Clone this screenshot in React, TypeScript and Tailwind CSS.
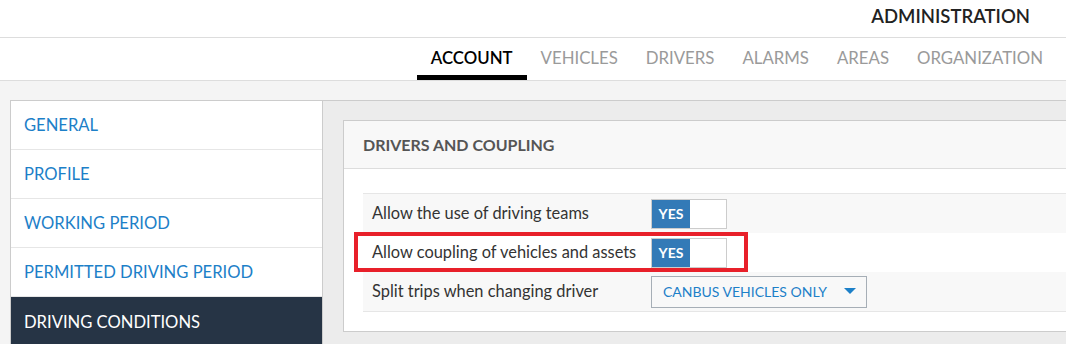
const tabs = ['ACCOUNT', 'VEHICLES', 'DRIVERS', 'ALARMS', 'AREAS', 'ORGANIZATION'];

const menu = ['GENERAL', 'PROFILE', 'WORKING PERIOD', 'PERMITTED DRIVING PERIOD', 'DRIVING CONDITIONS'];

function Toggle() {
  return (
    <div className="flex h-[30px] w-[76px] border border-[#cccccc] bg-white">
      <div className="flex w-[38px] items-center justify-center bg-[#337ab7] text-[14px] font-bold text-white">YES</div>
      <div className="flex-1" />
    </div>
  );
}

export default function App() {
  return (
    <div className="relative h-[344px] w-[1066px] overflow-hidden bg-[#f4f4f4] font-['Lato',sans-serif]">
      {/* Header */}
      <div className="bg-white">
        <div className="flex h-[38px] items-center justify-end border-b border-[#dddddd] pb-[3px] pr-[36px]">
          <span className="text-[18.5px] font-semibold text-[#222222]">ADMINISTRATION</span>
        </div>
        <div className="flex h-[43px] justify-end border-b border-[#dddddd] pr-[9px]">
          {tabs.map((t, i) => (
            <div
              key={t}
              className={
                'flex items-center border-b-[5px] px-[14px] pt-[2px] text-[16.8px] ' +
                (i === 0 ? 'border-black font-semibold text-black' : 'border-transparent text-[#9a9a9a]')
              }
            >
              {t}
            </div>
          ))}
        </div>
      </div>

      {/* Main */}
      <div className="mt-[19px] flex pl-[10px]">
        <div className="w-[313px] shrink-0 border border-[#cccccc] bg-white">
          {menu.map((m, i) => (
            <div
              key={m}
              className={
                'flex h-[49px] items-center pl-[13px] pt-[1px] text-[16.6px] ' +
                (i === menu.length - 1
                  ? 'bg-[#263445] text-white'
                  : 'border-b border-[#e6e6e6] text-[#1d80c8]')
              }
            >
              {m}
            </div>
          ))}
        </div>

        <div className="flex-1 overflow-hidden border-t border-[#cccccc] bg-[#ececec] pl-[20px] pt-[19px]">
          <div className="w-[900px] border border-[#cccccc] bg-white">
            <div className="flex h-[48px] items-center border-b border-[#dddddd] bg-[#f8f8f8] pl-[19px] text-[16px] font-bold text-[#555555]">
              DRIVERS AND COUPLING
            </div>
            <div className="px-[19px] pb-[19px] pt-[24px]">
              <div className="border-b border-t border-[#e6e6e6] text-[16.4px] text-[#333333]">
                <div className="flex h-[39px] items-center bg-[#f8f8f8]">
                  <div className="w-[288px] pl-[9px]">Allow the use of driving teams</div>
                  <Toggle />
                </div>
                <div className="flex h-[39px] items-center bg-white">
                  <div className="w-[288px] pl-[9px]">Allow coupling of vehicles and assets</div>
                  <Toggle />
                </div>
                <div className="flex h-[39px] items-center bg-[#f8f8f8]">
                  <div className="w-[288px] pl-[9px]">Split trips when changing driver</div>
                  <div className="flex h-[32px] w-[216px] items-center justify-between border border-[#a6aeb6] pl-[11px] pr-[10px] text-[14px] text-[#1d80c8]">
                    <span>CANBUS VEHICLES ONLY</span>
                    <svg width="12" height="7" viewBox="0 0 12 7">
                      <path d="M0 0 L12 0 L6 6 Z" fill="#1d80c8" />
                    </svg>
                  </div>
                </div>
              </div>
            </div>
          </div>
        </div>
      </div>

      {/* Highlight annotation */}
      <div className="absolute left-[354px] top-[232px] h-[40px] w-[394px] border-[4px] border-[#e8202a]" />
    </div>
  );
}
